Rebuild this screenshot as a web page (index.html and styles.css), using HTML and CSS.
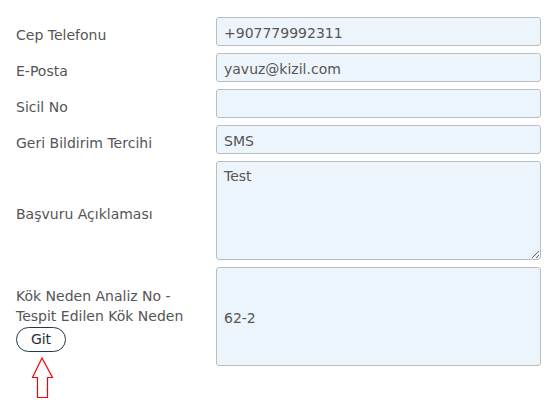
FILE: index.html
```html
<!DOCTYPE html>
<html lang="tr">
<head>
    <meta charset="UTF-8">
    <meta name="viewport" content="width=device-width, initial-scale=1.0">
    <title>Başvuru Detayı</title>
    <link rel="stylesheet" href="styles.css">
</head>
<body>
    <form class="form-grid">
        <label class="field-label" for="phone">Cep Telefonu</label>
        <input class="field-input" type="text" id="phone" value="+907779992311">

        <label class="field-label" for="email">E-Posta</label>
        <input class="field-input" type="text" id="email" value="yavuz@kizil.com">

        <label class="field-label" for="sicil">Sicil No</label>
        <input class="field-input" type="text" id="sicil" value="">

        <label class="field-label" for="feedback">Geri Bildirim Tercihi</label>
        <input class="field-input" type="text" id="feedback" value="SMS">

        <label class="field-label" for="desc">Başvuru Açıklaması</label>
        <textarea class="field-input field-area" id="desc">Test</textarea>

        <div class="field-label root-label">
            <span>Kök Neden Analiz No - Tespit Edilen Kök Neden</span>
            <div class="git-wrap">
                <button type="button" class="git-button">Git</button>
                <svg class="arrow" width="24" height="42" viewBox="0 0 24 42">
                    <path d="M11 1 L1.5 20.5 L6.5 20.5 L6.5 40.5 L16.5 40.5 L16.5 20.5 L21.5 20.5 Z" fill="#fff" stroke="#f00" stroke-width="1.2"/>
                </svg>
            </div>
        </div>
        <div class="field-input field-box">62-2</div>
    </form>
</body>
</html>
```

FILE: styles.css
```css
html, body {
    min-height: 100%;
}

body {
    margin: 0;
    padding: 0;
    min-height: 100vh;
    background-color: #fff;
    font-family: "DejaVu Sans", Verdana, sans-serif;
    font-size: 14px;
    color: #555;
}

.form-grid {
    display: grid;
    grid-template-columns: 200px 325px;
    row-gap: 7px;
    padding: 17px 0 50px 16px;
}

.field-label {
    display: flex;
    align-items: center;
    line-height: 20px;
    padding: 6px 12px 0 0;
}

.field-input {
    box-sizing: border-box;
    width: 100%;
    height: 29px;
    margin: 0;
    padding: 5px 7px 3px;
    border: 1px solid #b9bec4;
    border-radius: 3px;
    background-color: #edf5fc;
    font-family: inherit;
    font-size: 14px;
    color: #555;
}

.field-area {
    height: 99px;
    resize: vertical;
    line-height: 20px;
    padding-top: 4px;
}

.field-box {
    height: 99px;
    display: flex;
    align-items: center;
}

.root-label {
    flex-direction: column;
    align-items: flex-start;
    justify-content: center;
    padding-top: 4px;
}

.git-wrap {
    position: relative;
}

.git-button {
    width: 50px;
    height: 25px;
    margin-top: 1px;
    border: 1px solid #24384a;
    border-radius: 13px;
    background-color: #fff;
    font-family: inherit;
    font-size: 14px;
    color: #1f2d3a;
    cursor: pointer;
}

.arrow {
    position: absolute;
    left: 15px;
    top: 31px;
}
```
